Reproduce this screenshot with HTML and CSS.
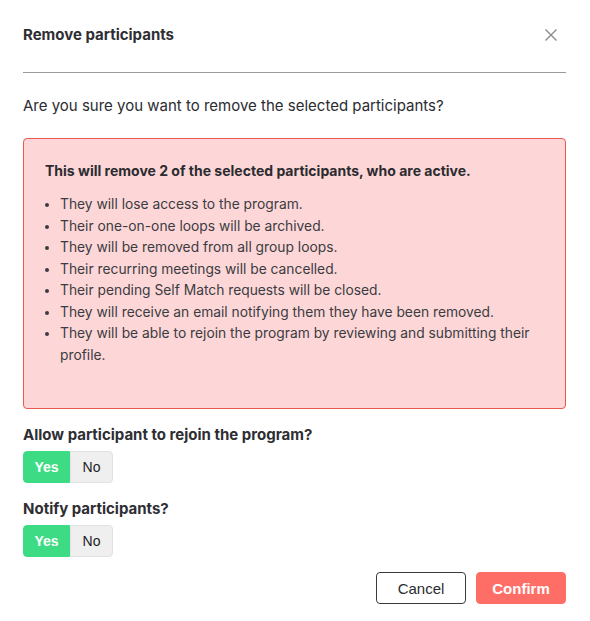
FILE: index.html
```html
<!DOCTYPE html>
<html lang="en">
<head>
  <meta charset="UTF-8" />
  <title>Remove participants</title>
  <link rel="stylesheet" href="styles.css">
</head>
<body>
  <div class="modal">
    <div class="modal-header">
      <h2>Remove participants</h2>
      <button class="close" aria-label="Close">
        <svg width="12" height="12" viewBox="0 0 12 12"><path d="M0.5 0.5L11.5 11.5M11.5 0.5L0.5 11.5" stroke="#8a8a8a" stroke-width="1.4" fill="none"/></svg>
      </button>
    </div>
    <p class="question">Are you sure you want to remove the selected participants?</p>
    <div class="warning">
      <div class="warning-title">This will remove 2 of the selected participants, who are active.</div>
      <ul>
        <li>They will lose access to the program.</li>
        <li>Their one-on-one loops will be archived.</li>
        <li>They will be removed from all group loops.</li>
        <li>Their recurring meetings will be cancelled.</li>
        <li>Their pending Self Match requests will be closed.</li>
        <li>They will receive an email notifying them they have been removed.</li>
        <li>They will be able to rejoin the program by reviewing and submitting their profile.</li>
      </ul>
    </div>
    <div class="field">
      <label>Allow participant to rejoin the program?</label>
      <div class="toggle">
        <button class="on">Yes</button><button>No</button>
      </div>
    </div>
    <div class="field">
      <label>Notify participants?</label>
      <div class="toggle">
        <button class="on">Yes</button><button>No</button>
      </div>
    </div>
    <div class="actions">
      <button class="btn cancel">Cancel</button>
      <button class="btn confirm">Confirm</button>
    </div>
  </div>
</body>
</html>
```

FILE: styles.css
```css
body {
  margin: 0;
  background: #fff;
  font-family: 'Inter', sans-serif;
  color: #2b2b30;
}
.modal {
  padding: 0 24px 0 23px;
}
.modal-header {
  display: flex;
  align-items: center;
  justify-content: space-between;
  height: 72px;
  border-bottom: 1px solid #9a9a9e;
}
.modal-header h2 {
  margin: 0;
  font-size: 15px;
  font-weight: 700;
  color: #2e2e33;
  position: relative;
  top: -2px;
}
.close {
  background: none;
  border: none;
  padding: 0;
  margin-right: 9px;
  cursor: pointer;
}
.question {
  margin: 23px 0 0;
  font-size: 15px;
  line-height: 20px;
  color: #2b2b30;
}
.warning {
  margin-top: 22px;
  background: #fdd7d7;
  border: 1px solid #e8594f;
  border-radius: 4px;
  height: 271px;
  box-sizing: border-box;
  padding: 22px 21px 0 21px;
}
.warning-title {
  font-size: 14px;
  font-weight: 700;
  line-height: 20px;
  color: #2b2b30;
}
.warning ul {
  margin: 13px 0 0;
  padding-left: 15px;
  font-size: 13.8px;
  line-height: 21.5px;
  color: #3b3b42;
}
.field {
  margin-top: 16px;
}
.field label {
  display: block;
  font-size: 15px;
  font-weight: 700;
  line-height: 20px;
  color: #2e2e33;
}
.toggle {
  display: flex;
  margin-top: 6px;
}
.toggle button {
  font-family: 'Liberation Sans', Arial, sans-serif;
  font-size: 14px;
  height: 32px;
  width: 43px;
  border: 1px solid #e2e2e2;
  background: #efefef;
  color: #222;
  border-radius: 0 4px 4px 0;
  padding: 0;
}
.toggle button.on {
  width: 47px;
  background: #3ddc84;
  border-color: #3ddc84;
  color: #fff;
  font-weight: 700;
  border-radius: 4px 0 0 4px;
}
.actions {
  display: flex;
  justify-content: flex-end;
  gap: 10px;
  margin-top: 15px;
}
.btn {
  font-family: 'Liberation Sans', Arial, sans-serif;
  font-size: 15px;
  width: 90px;
  height: 32px;
  border-radius: 4px;
  cursor: pointer;
}
.cancel {
  background: #fff;
  border: 1px solid #3a3a40;
  color: #2b2b30;
}
.confirm {
  background: #ff6e66;
  border: 1px solid #ff6e66;
  color: #fff;
  font-weight: 700;
}
```
